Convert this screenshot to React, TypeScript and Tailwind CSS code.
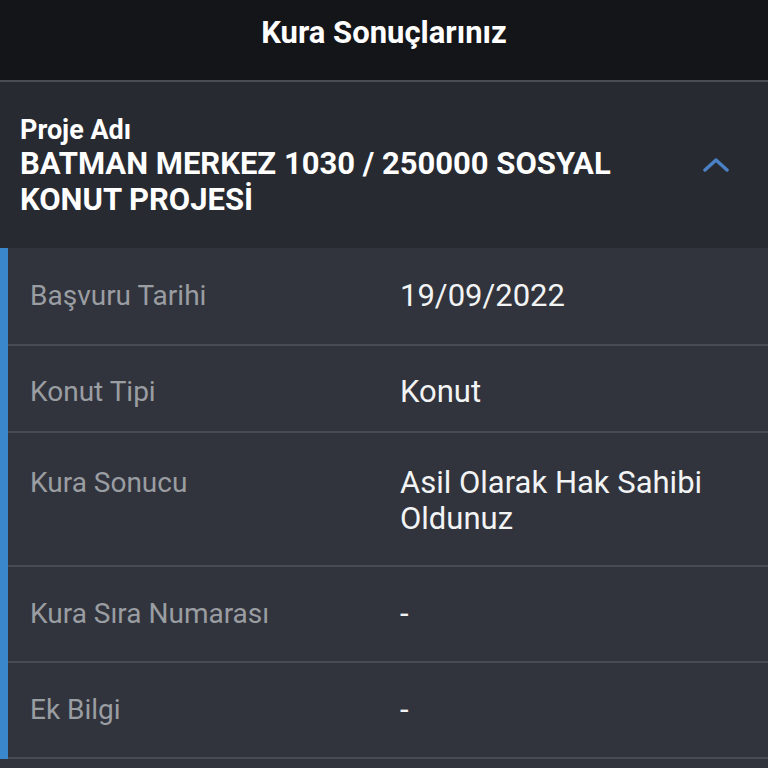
import React from 'react';

interface Row {
  label: string;
  value: string;
  pad: string;
}

const rows: Row[] = [
  { label: 'Başvuru Tarihi', value: '19/09/2022', pad: 'pt-[30px] pb-[30px]' },
  { label: 'Konut Tipi', value: 'Konut', pad: 'pt-[28px] pb-[21px]' },
  { label: 'Kura Sonucu', value: 'Asil Olarak Hak Sahibi Oldunuz', pad: 'pt-[32px] pb-[28px]' },
  { label: 'Kura Sıra Numarası', value: '-', pad: 'pt-[29px] pb-[29px]' },
  { label: 'Ek Bilgi', value: '-', pad: 'pt-[29px] pb-[29px]' },
];

export default function App() {
  return (
    <div className="min-h-[768px] bg-[#31343c] font-['Roboto',sans-serif] overflow-hidden">
      {/* Header */}
      <div className="h-[82px] bg-[#141519] border-b-2 border-[#4a4d53] pt-[15px]">
        <h1 className="text-center text-[31px] leading-[36px] font-bold text-white">Kura Sonuçlarınız</h1>
      </div>

      {/* Proje */}
      <div className="bg-[#272a31] h-[166px] pl-5 pr-10 flex items-center">
        <div className="flex-1 self-start pt-[33px]">
          <div className="text-[27px] leading-[30px] font-bold text-white">Proje Adı</div>
          <div className="mt-[1px] text-[31px] leading-[36px] font-bold text-white max-w-[640px]">
            BATMAN MERKEZ 1030 / 250000 SOSYAL KONUT PROJESİ
          </div>
        </div>
        <svg width="26" height="16" viewBox="0 0 26 16" className="mr-[-1px] -mt-[1px]">
          <path d="M2 13 L13 3 L24 13" fill="none" stroke="#4a80c4" strokeWidth="3.5" strokeLinecap="round" strokeLinejoin="round" />
        </svg>
      </div>

      {/* Detaylar */}
      <div className="flex">
        <div className="w-[8px] bg-[#3b87cc]" />
        <div className="flex-1">
          {rows.map((r) => (
            <div key={r.label} className={`flex border-b-2 border-[#474b53] ${r.pad}`}>
              <div className="w-[392px] pl-[22px] text-[28px] leading-[36px] text-[#9a9da2]">{r.label}</div>
              <div className="flex-1 text-[31px] leading-[36px] text-[#f2f3f4] max-w-[330px]">{r.value}</div>
            </div>
          ))}
        </div>
      </div>
    </div>
  );
}
